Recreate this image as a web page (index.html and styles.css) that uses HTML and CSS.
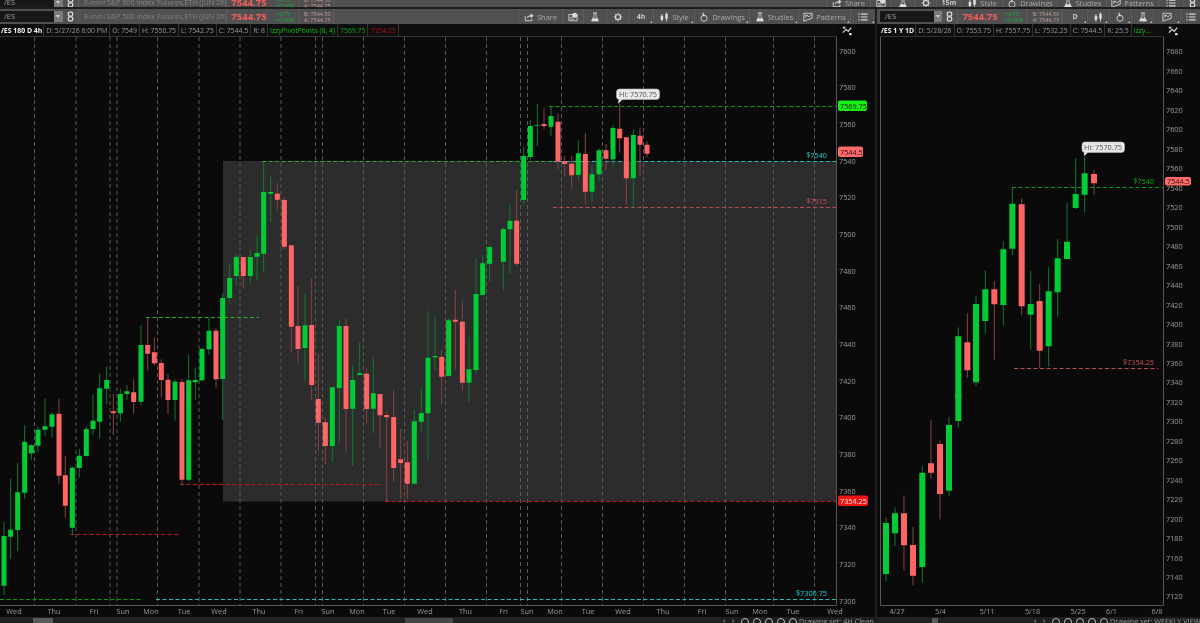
FILE: index.html
```html
<!DOCTYPE html>
<html lang="en">
<head>
<meta charset="utf-8">
<title>/ES chart grid</title>
<link rel="stylesheet" href="styles.css">
</head>
<body>
<svg class="defs" width="0" height="0" aria-hidden="true">
  <symbol id="i-share" viewBox="0 0 12 12"><path class="o" d="M1.5 5v5.5h8V8"/><path class="f" d="M3 8c.5-3 2.500-4.200 5-4.200V1.500L11.500 4.500 8 7.500V5.300C6 5.300 4.300 6 3 8z"/></symbol>
  <symbol id="i-cal" viewBox="0 0 12 12"><path class="o" d="M1 3h10v7.500H1z"/><circle class="f" cx="8" cy="4" r="3"/><path class="f" d="M2.500 6h3v1h-3zM2.500 8h5v1h-5z"/></symbol>
  <symbol id="i-flask" viewBox="0 0 12 12"><path class="o" d="M3.800 1h4.400M4.800 1v4.200L2 10.500h8L7.200 5.200V1"/><path class="f" d="M3.400 7.500h5.200L10.500 11h-9z"/></symbol>
  <symbol id="i-gear" viewBox="0 0 12 12"><circle class="o thick" cx="6" cy="6" r="3"/><path class="o" d="M6 .8v2M6 9.200v2M.8 6h2M9.200 6h2M2.300 2.300l1.400 1.400M8.300 8.300l1.400 1.400M2.300 9.700l1.400-1.400M8.300 3.700l1.400-1.400"/></symbol>
  <symbol id="i-style" viewBox="0 0 12 12"><path class="f" d="M2 4.500h3v5H2zM7.500 2h3v6h-3z"/><path class="o" d="M3.500 2.500v9M9 .5v11"/></symbol>
  <symbol id="i-draw" viewBox="0 0 12 12"><circle class="o" cx="6" cy="7.500" r="3.700"/><path class="o thick" d="M4.500 1l1.800 4"/></symbol>
  <symbol id="i-pat" viewBox="0 0 12 12"><path class="o" d="M1 1.500h10v6L1 11z"/><path class="o" d="M2.500 7l2.500-3 2 2 3-3M2.500 4h3"/></symbol>
  <symbol id="i-menu" viewBox="0 0 12 12"><path class="o thick" d="M3.500 2.500h8M3.500 6h8M3.500 9.500h8M.5 2.500h1.500M.5 6h1.500M.5 9.500h1.500"/></symbol>
  <symbol id="i-link" viewBox="0 0 8 12"><rect class="o thick" x="1.500" y="1" width="5" height="4.500" rx="1.500"/><rect class="o thick" x="1.500" y="6.500" width="5" height="4.500" rx="1.500"/></symbol>
  <symbol id="i-swap" viewBox="0 0 12 12"><path class="o thick" d="M1 8l4-4 2.500 2.500L11 2"/><path class="f" d="M1 1h3v2H1zM8.500 8.500h3v2.500h-3z"/></symbol>
</svg>

<div class="strip">
  <div class="toolbar">
    <div class="sym">/ES</div><div class="caret"></div>
    <div class="tb-cell link"><svg class="ic-link"><use href="#i-link"/></svg></div>
    <div class="desc">E-mini S&amp;P 500 Index Futures,ETH (JUN 26)</div>
    <div class="price">7544.75</div>
    <div class="change"><span>+4.75</span><span>+0.06%</span></div>
    <div class="bidask"><span>B: 7544.50</span><span>A: 7544.75</span></div>
    <div class="spacer"></div>
    <div class="btn w44"><svg class="ic"><use href="#i-share"/></svg>Share</div>
    <div class="btn w21"><svg class="ic"><use href="#i-cal"/></svg></div>
    <div class="btn w23"><svg class="ic"><use href="#i-flask"/></svg></div>
    <div class="btn w22"><svg class="ic"><use href="#i-gear"/></svg></div>
    <div class="btn w25 bold">15m</div>
    <div class="btn w41"><svg class="ic"><use href="#i-style"/></svg>Style</div>
    <div class="btn w55"><svg class="ic"><use href="#i-draw"/></svg>Drawings</div>
    <div class="btn w49"><svg class="ic"><use href="#i-flask"/></svg>Studies</div>
    <div class="btn w52"><svg class="ic"><use href="#i-pat"/></svg>Patterns</div>
    <div class="btn w25"><svg class="ic"><use href="#i-menu"/></svg></div>
    <div class="btn w17"><svg class="ic-link"><use href="#i-link"/></svg></div>
  </div>
</div>

<div class="panes">
  <section class="pane pane-left">
    <div class="toolbar">
      <div class="sym">/ES</div><div class="caret"></div>
      <div class="tb-cell link"><svg class="ic-link"><use href="#i-link"/></svg></div>
      <div class="desc">E-mini S&amp;P 500 Index Futures,ETH (JUN 26)</div>
      <div class="price">7544.75</div>
      <div class="change"><span>+4.75</span><span>+0.06%</span></div>
      <div class="bidask"><span>B: 7544.50</span><span>A: 7544.75</span></div>
      <div class="spacer"></div>
      <div class="btn w44"><svg class="ic"><use href="#i-share"/></svg>Share</div>
      <div class="btn w21"><svg class="ic"><use href="#i-cal"/></svg></div>
      <div class="btn w23"><svg class="ic"><use href="#i-flask"/></svg></div>
      <div class="btn w22"><svg class="ic"><use href="#i-gear"/></svg></div>
      <div class="btn w25 bold corner">4h</div>
      <div class="btn w41 corner"><svg class="ic"><use href="#i-style"/></svg>Style</div>
      <div class="btn w55 corner"><svg class="ic"><use href="#i-draw"/></svg>Drawings</div>
      <div class="btn w49 corner"><svg class="ic"><use href="#i-flask"/></svg>Studies</div>
      <div class="btn w52 corner"><svg class="ic"><use href="#i-pat"/></svg>Patterns</div>
      <div class="btn w25 corner"><svg class="ic"><use href="#i-menu"/></svg></div>
    </div>
    <div class="inforow">
      <div class="cells">
        <div class="cell title">/ES 180 D 4h</div>
        <div class="cell">D: 5/27/26 6:00 PM</div>
        <div class="cell">O: 7549</div>
        <div class="cell">H: 7550.75</div>
        <div class="cell">L: 7542.75</div>
        <div class="cell">C: 7544.5</div>
        <div class="cell">R: 8</div>
        <div class="cell up">IzzyPivotPoints (8, 4)</div>
        <div class="cell up2">7569.75</div>
        <div class="cell dn2">7354.25</div>
        <div class="cell fill"></div>
      </div>
      <div class="corner-ic left-corner"><svg class="ic"><use href="#i-swap"/></svg></div>
    </div>
    <svg class="chart" viewBox="0 37 875 580" width="875" height="580">
      <rect class="bg" x="0" y="37" width="875" height="580"/>
      <rect class="zone" x="223" y="161" width="613.500" height="340.500"/>
      <path class="grid" d="M34.500 37V605M76 37V605M110 37V605M117 37V605M157.500 37V605M199 37V605M240 37V605M281 37V605M315.500 37V605M322.500 37V605M363.500 37V605M404.500 37V605M445.500 37V605M486.500 37V605M520.500 37V605M527.500 37V605M561.500 37V605M602.500 37V605M643.500 37V605M684.500 37V605M725.500 37V605M773.500 37V605M814.500 37V605"/>

      <path class="lvl lv-green" d="M549 106.500H836"/>
      <path class="lvl lv-brightgreen" d="M262 161.500H553"/>
      <path class="lvl lv-cyan" d="M553 161.500H836"/>
      <path class="lvl lv-softred" d="M553 207.500H836"/>
      <path class="lvl lv-brightgreen" d="M146 317.500H259"/>
      <path class="lvl lv-red" d="M180 484.500H382"/>
      <path class="lvl lv-red" d="M385 501.500H836"/>
      <path class="lvl lv-red" d="M70 534.500H178"/>
      <path class="lvl lv-green" d="M0 599.500H143"/>
      <path class="lvl lv-cyan" d="M156 599.500H836"/>

      <g transform="translate(0 300) scale(.33333)">
        <path class="wick-g" d="M12 665V885M32 537V777M53 489V753M74 376V597M94 432V479M114 380V458M135 295V407M156 337V411M217 500V703M238 447V533M259 380V470M279 284V405M299 220V415M320 200V312M361 267V365M381 255V300M423 75V315M525 238V362M566 165V545M586 202V300M606 141V243M627 52V165"/>
        <path class="wick-r" d="M177 297V551M196 468V653M340 282V405M401 238V341M443 52V212M463 112V195M484 178V292M504 221V341M546 237V555M648 82V263"/>
        <path class="body-g" d="M12 708V857M32 689V710M53 577V690M74 425V578M94 436V460M114 389V437M135 379V389M156 343V380M217 503V683M238 467V504M259 387V468M279 362V387M299 265V365M320 240V266M361 282V340M381 274V282M423 135V305M525 245V300M566 241V539M586 240V247M606 147V241M627 92V148"/>
        <path class="body-r" d="M177 341V527M196 526V617M340 334V340M401 277V306M443 135V161M463 157V190M484 189V240M504 239V300M546 246V539M648 92V238"/>
      </g>
      <g transform="translate(220 90) scale(.33333)">
        <path class="wick-g" d="M8 610V990M29 522V640M49 492V586M91 477V581M111 435V571M131 214V546M152 261V396M255 610V872M337 890V1115M358 689V1058M398 826V1128M419 758V855M460 802V1030M583 960V1181M604 893V1026M624 663V1112M645 680V840M686 685V858M747 742V936M768 505V850M788 495V617M809 465V576M850 413V602M870 343V552"/>
        <path class="wick-r" d="M70 501V594M172 278V363M193 322V478M214 470V788M234 588V820M275 565V932M295 790V1085M316 982V1122M378 685V1085M440 835V1000M480 912V1072M500 963V1234M521 898V1177M542 1017V1226M562 1053V1226M665 780V942M706 600V838M727 632V902M890 300V530"/>
        <path class="body-g" d="M8 624V867M29 564V624M49 501V558M91 501V558M111 489V500M131 306V491M152 306V311M255 706V774M337 892V1068M358 708V894M398 870V956M419 850V855M460 910V956M583 994V1181M604 969V995M624 803V970M645 798V802M686 691V858M747 838V878M768 612V840M788 520V615M809 471V521M850 417V515M870 392V418"/>
        <path class="body-r" d="M70 501V558M172 311V329M193 330V470M214 466V710M234 708V777M275 705V885M295 927V998M316 997V1068M378 708V957M440 851V957M480 912V976M500 975V982M521 981V1134M542 1108V1119M562 1117V1181M665 801V860M706 689V695M727 695V878M890 392V521"/>
      </g>
      <g transform="translate(500 80) scale(.33333)">
        <path class="wick-g" d="M71 202V372M91 120V240M112 72V198M153 80V168M235 180V300M276 255V365M297 204V305M339 135V260M400 148V382"/>
        <path class="wick-r" d="M132 85V148M174 100V268M194 228V290M215 228V326M256 158V372M318 193V270M359 72V218M379 172V375M420 143V288M441 184V232"/>
        <path class="body-g" d="M71 228V360M91 138V231M112 135V137M153 108V140M235 220V285M276 283V335M297 211V283M339 144V238M400 165V295"/>
        <path class="body-r" d="M132 132V138M174 125V245M194 244V252M215 251V286M256 222V335M318 211V236M359 146V175M379 172V295M420 167V194M441 194V221"/>
      </g>

      <path class="axisline" d="M836.500 37V605M0 605.500H836.500"/>

      <g class="hi">
        <path class="hi-tail" d="M619 98L618 104 624 98z"/>
        <rect class="hi-box" x="616.500" y="89" width="43" height="10.500" rx="3"/>
        <text class="hi-text" x="638" y="97">Hi: 7570.75</text>
      </g>
      <text class="note cy" x="827" y="157.500" text-anchor="end">$7540</text>
      <text class="note rd" x="827" y="203.500" text-anchor="end">$7515</text>
      <text class="note cy" x="827" y="595.500" text-anchor="end">$7300.75</text>

      <g class="axis">
        <text x="839" y="53.500">7600</text><text x="839" y="90">7580</text><text x="839" y="127">7560</text><text x="839" y="163.500">7540</text><text x="839" y="200">7520</text><text x="839" y="237">7500</text><text x="839" y="273.500">7480</text><text x="839" y="310">7460</text><text x="839" y="347">7440</text><text x="839" y="383.500">7420</text><text x="839" y="420">7400</text><text x="839" y="457">7380</text><text x="839" y="493.500">7360</text><text x="839" y="530">7340</text><text x="839" y="567">7320</text><text x="839" y="603.500">7300</text>
      </g>
      <rect class="flag f-green" x="838" y="100.500" width="29" height="10.500" rx="2"/>
      <text class="flag-text dark" x="840" y="108.500">7569.75</text>
      <rect class="flag f-salmon" x="838" y="146.500" width="25" height="10.500" rx="2"/>
      <text class="flag-text dark" x="840" y="154.500">7544.5</text>
      <rect class="flag f-red" x="838" y="495.500" width="30" height="10.500" rx="2"/>
      <text class="flag-text light" x="840" y="503.500">7354.25</text>

      <g class="axis times">
        <text x="14" y="614">Wed</text><text x="54" y="614">Thu</text><text x="94" y="614">Fri</text><text x="123" y="614">Sun</text><text x="151" y="614">Mon</text><text x="184" y="614">Tue</text><text x="219" y="614">Wed</text><text x="259" y="614">Thu</text><text x="298.500" y="614">Fri</text><text x="328" y="614">Sun</text><text x="357" y="614">Mon</text><text x="389" y="614">Tue</text><text x="425" y="614">Wed</text><text x="465.500" y="614">Thu</text><text x="503.500" y="614">Fri</text><text x="527" y="614">Sun</text><text x="555" y="614">Mon</text><text x="588" y="614">Tue</text><text x="623" y="614">Wed</text><text x="663" y="614">Thu</text><text x="702" y="614">Fri</text><text x="732" y="614">Sun</text><text x="760" y="614">Mon</text><text x="793" y="614">Tue</text><text x="835" y="614">Wed</text>
      </g>
    </svg>
    <div class="bottombar">
      <div class="track">
        <div class="thumb thumb-a"></div>
        <div class="thumb thumb-b"></div>
      </div>
      <div class="bar-tools">
        <span class="chev">‹</span><span class="chev">›</span>
        <i class="round"></i><i class="round"></i><i class="round"></i><i class="round"></i><i class="round"></i>
      </div>
      <div class="drawset left-set">Drawing set: 4H Clean</div>
    </div>
  </section>

  <section class="pane pane-right">
    <div class="toolbar tb-right">
      <div class="sym sym-r">/ES</div><div class="caret"></div>
      <div class="tb-cell link"><svg class="ic-link"><use href="#i-link"/></svg></div>
      <div class="price">7544.75</div>
      <div class="change cr"><span>+4.75</span><span>+0.06%</span></div>
      <div class="bidask br"><span>B: 7544.50</span><span>A: 7544.75</span></div>
      <div class="btn w25 bold corner">D</div>
      <div class="btn w21 corner"><svg class="ic"><use href="#i-style"/></svg></div>
      <div class="btn w23 corner"><svg class="ic"><use href="#i-draw"/></svg></div>
      <div class="btn w23 corner"><svg class="ic"><use href="#i-flask"/></svg></div>
      <div class="btn w27 corner"><svg class="ic"><use href="#i-pat"/></svg></div>
      <div class="btn w20"><svg class="ic"><use href="#i-menu"/></svg></div>
    </div>
    <div class="inforow">
      <div class="cells cells-r">
        <div class="cell title">/ES 1 Y 1D</div>
        <div class="cell">D: 5/28/26</div>
        <div class="cell">O: 7553.75</div>
        <div class="cell">H: 7557.75</div>
        <div class="cell">L: 7532.25</div>
        <div class="cell">C: 7544.5</div>
        <div class="cell">R: 25.5</div>
        <div class="cell up fill">Izzy...</div>
      </div>
      <div class="corner-ic"><svg class="ic"><use href="#i-swap"/></svg></div>
    </div>
    <svg class="chart" viewBox="877 37 323 580" width="323" height="580">
      <rect class="bg" x="877" y="37" width="323" height="580"/>
      <path class="lvl lv-green" d="M1012 187.500H1163"/>
      <path class="lvl lv-softred" d="M1014 368.500H1158"/>
      <g transform="translate(880 130) scale(.33333)">
        <path class="wick-g" d="M235 592V800M288 498V768M316 421V610M370 335V585M397 172V375M452 423V660M506 412V710M533 327V560M561 219V387M587 85V238M614 80V247"/>
        <path class="wick-r" d="M262 550V743M343 453V689M425 205V556M479 461V715M642 120V196"/>
        <path class="body-g wide" d="M235 619V800M288 522V757M316 478V573M370 358V525M397 221V356M452 522V554M506 484V649M533 385V487M561 335V387M587 192V234M614 130V194"/>
        <path class="body-r wide" d="M262 637V721M343 478V523M425 223V529M479 513V662M642 132V160"/>
      </g>
      <g transform="translate(880 380) scale(.33333)">
        <path class="wick-g" d="M18 414V605M45 382V498M127 259V608M207 111V347M235 40V142"/>
        <path class="wick-r" d="M72 346V572M99 441V616M153 120V296M180 181V418"/>
        <path class="body-g wide" d="M18 429V582M45 400V460M127 278V561M207 135V332M235 40V123"/>
        <path class="body-r wide" d="M72 400V496M99 495V587M153 250V278M180 192V342"/>
      </g>
      <path class="axisline" d="M880.500 37V605.500H1163.500V37"/>
      <g class="hi">
        <path class="hi-tail" d="M1084 151L1084 156 1090 151z"/>
        <rect class="hi-box" x="1082" y="142" width="42.500" height="10.500" rx="3"/>
        <text class="hi-text" x="1103" y="150">Hi: 7570.75</text>
      </g>
      <text class="note gn" x="1154" y="184" text-anchor="end">$7540</text>
      <text class="note rd" x="1154" y="364.500" text-anchor="end">$7354.25</text>
      <g class="axis">
        <text x="1166" y="54">7680</text><text x="1166" y="73.500">7660</text><text x="1166" y="93">7640</text><text x="1166" y="112.500">7620</text><text x="1166" y="132">7600</text><text x="1166" y="151.500">7580</text><text x="1166" y="171">7560</text><text x="1166" y="191">7540</text><text x="1166" y="210">7520</text><text x="1166" y="229.500">7500</text><text x="1166" y="249">7480</text><text x="1166" y="268.500">7460</text><text x="1166" y="288">7440</text><text x="1166" y="307.500">7420</text><text x="1166" y="327">7400</text><text x="1166" y="346.500">7380</text><text x="1166" y="365.500">7360</text><text x="1166" y="385">7340</text><text x="1166" y="404.500">7320</text><text x="1166" y="424">7300</text><text x="1166" y="443.500">7280</text><text x="1166" y="463">7260</text><text x="1166" y="482.500">7240</text><text x="1166" y="502">7220</text><text x="1166" y="521.500">7200</text><text x="1166" y="541">7180</text><text x="1166" y="560.500">7160</text><text x="1166" y="580">7140</text><text x="1166" y="599">7120</text>
      </g>
      <rect class="flag f-salmon" x="1165" y="177" width="26" height="8.500" rx="2"/>
      <text class="flag-text dark" x="1167" y="183.800">7544.5</text>
      <g class="axis times">
        <text x="897" y="614">4/27</text><text x="940.500" y="614">5/4</text><text x="987" y="614">5/11</text><text x="1032.500" y="614">5/18</text><text x="1078" y="614">5/25</text><text x="1111.500" y="614">6/1</text><text x="1157" y="614">6/8</text>
      </g>
    </svg>
    <div class="bottombar">
      <div class="track">
        <div class="thumb thumb-c"></div>
      </div>
      <div class="bar-tools">
        <span class="chev">‹</span><span class="chev">›</span>
        <i class="round"></i><i class="round"></i><i class="round"></i><i class="round"></i><i class="round"></i>
      </div>
      <div class="drawset">Drawing set: WEEKLY VIEW</div>
    </div>
  </section>
</div>
</body>
</html>
```
FILE: styles.css
```css
* { box-sizing: border-box; }
html, body { margin: 0; height: 100%; overflow: hidden; background: #1d1d1d; }
body { font-family: "Open Sans", "Liberation Sans", sans-serif; font-size: 7px; color: #8e8e8e; filter: blur(.3px); }
.defs { position: absolute; }

.strip { height: 7px; overflow: hidden; margin-bottom: 2px; }
.strip .toolbar { margin-top: -5px; }

.panes { display: flex; gap: 2px; height: 614px; }
.pane { display: flex; flex-direction: column; min-width: 0; }
.pane-left { width: 875px; }
.pane-right { width: 323px; flex: none; }

.toolbar { display: flex; align-items: stretch; height: 15px; background: #505050; color: #a8a8a8; font-size: 7.5px; }
.tb-right { padding-left: 3px; }

.sym { width: 54px; background: #171717; color: #a0a0a0; margin: 2px 0 2px 0; padding: 0 0 0 4px; line-height: 11px; }
.sym-r { padding-left: 5px; }
.caret { position: relative; width: 9px; margin: 2px 0; background: #7b7b7b; }
.caret::after { content: ""; position: absolute; left: 2px; top: 4px; border: 2.500px solid transparent; border-top: 3px solid #cfcfcf; border-bottom: 0; }
.tb-cell { display: flex; align-items: center; justify-content: center; }
.link { width: 16px; border-right: 1px solid #5d5d5d; }
.ic-link { width: 7px; height: 11px; }

.desc { width: 148px; padding-left: 5px; line-height: 15px; font-size: 7.2px; color: #828282; white-space: nowrap; border-right: 1px solid #5d5d5d; }
.price { width: 44px; text-align: center; line-height: 15px; font-size: 9.500px; font-weight: 700; color: #f55c5c; }
.change { width: 28px; display: flex; flex-direction: column; justify-content: center; padding-left: 5px; font-size: 5.500px; line-height: 6px; color: #16b03c; }
.cr { width: 24px; padding-left: 3px; }
.bidask { width: 35px; display: flex; flex-direction: column; justify-content: center; padding-left: 4px; font-size: 5.500px; line-height: 6px; color: #c89a9a; white-space: nowrap; border-left: 1px solid #5d5d5d; border-right: 1px solid #5d5d5d; }
.br { width: 37px; padding-left: 6px; }
.spacer { flex: 1; }

.btn { position: relative; display: flex; align-items: center; justify-content: center; gap: 3px; border-left: 1px solid #5d5d5d; white-space: nowrap; }
.btn.bold { font-weight: 700; color: #c8c8c8; font-size: 7px; }
.corner::after { content: ""; position: absolute; right: 1px; bottom: 1px; border: 1.500px solid transparent; border-right-color: #cfcfcf; border-bottom-color: #cfcfcf; }
.ic { width: 10px; height: 10px; flex: none; }
.o { fill: none; stroke: #dcdcdc; stroke-width: 1; }
.thick { stroke-width: 1.400; }
.f { fill: #dcdcdc; }

.w17 { width: 17px; } .w20 { width: 20px; } .w21 { width: 21px; } .w22 { width: 22px; } .w23 { width: 23px; }
.w25 { width: 25px; } .w27 { width: 27px; } .w41 { width: 41px; } .w44 { width: 44px; } .w49 { width: 49px; }
.w52 { width: 52px; } .w55 { width: 55px; }

.inforow { display: flex; height: 13px; background: #0c0c0c; }
.cells { display: flex; gap: 1px; width: 837px; height: 13px; background: #333; border-bottom: 1px solid #333; }
.cells-r { width: 283px; margin-left: 3px; }
.cell { display: flex; align-items: center; padding: 0 2px; background: #0e0e0e; white-space: nowrap; font-size: 6.900px; color: #9a9a9a; }
.cell.title { font-weight: 700; color: #f0f0f0; padding: 0 1px; }
.cell.up { color: #10c010; }
.cell.up2 { color: #0aa80a; }
.cell.dn2 { color: #b01010; }
.cell.fill { flex: 1; }
.corner-ic { flex: 1; display: flex; align-items: center; padding-left: 5px; }
.left-corner { padding-left: 5px; }

.chart { display: block; flex: none; }
.bg { fill: #0a0a0a; }
.zone { fill: #2c2c2c; }
.grid { fill: none; stroke: #585858; stroke-width: 1; stroke-dasharray: 4 3; }
.axisline { fill: none; stroke: #555; stroke-width: 1; }

.lvl { fill: none; stroke-width: 1; stroke-dasharray: 4 2.500; }
.lv-green { stroke: #0e9a0e; }
.lv-brightgreen { stroke: #28b028; }
.lv-cyan { stroke: #22bcbc; }
.lv-softred { stroke: #b05050; }
.lv-red { stroke: #bb1818; }

.wick-g { fill: none; stroke: #0f7a30; stroke-width: 3; }
.wick-r { fill: none; stroke: #8a4242; stroke-width: 3; }
.body-g { fill: none; stroke: #00cc36; stroke-width: 15; }
.body-r { fill: none; stroke: #ff6565; stroke-width: 15; }
.wide { stroke-width: 18; }

.axis text { font-size: 7.300px; fill: #9a9a9a; }
.times text { text-anchor: middle; }
.note { font-size: 7.300px; }
.cy { fill: #1cd0d0; }
.rd { fill: #d05454; }
.gn { fill: #0ca50c; }
.hi-box { fill: #e8e8e8; stroke: #b8b8b8; stroke-width: .6; }
.hi-tail { fill: #e8e8e8; }
.hi-text { font-size: 7.300px; fill: #555; text-anchor: middle; }
.f-green { fill: #14f014; }
.f-salmon { fill: #ff6a6a; }
.f-red { fill: #f01414; }
.flag-text { font-size: 7.300px; }
.dark { fill: #2e1212; }
.light { fill: #fff0f0; }

.bottombar { display: flex; height: 6px; overflow: hidden; background: #1f1f1f; font-size: 7.300px; line-height: 9px; color: #9a9a9a; }
.track { position: relative; flex: 1; background: #222; }
.thumb { position: absolute; top: 1px; height: 5px; background: #5a5a5a; }
.thumb-a { left: 33px; width: 20px; }
.thumb-b { left: 405px; width: 48px; background: #474747; }
.thumb-c { left: 55px; width: 6px; }
.bar-tools { display: flex; align-items: flex-start; gap: 4px; width: 77px; padding-left: 2px; color: #c0c0c0; line-height: 6px; }
.chev { width: 5px; }
.round { flex: none; width: 8px; height: 8px; margin-top: 1px; border: 1px solid #bdbdbd; border-radius: 50%; }
.drawset { width: 91px; padding-left: 1px; white-space: nowrap; }
.left-set { width: 77px; }
```
